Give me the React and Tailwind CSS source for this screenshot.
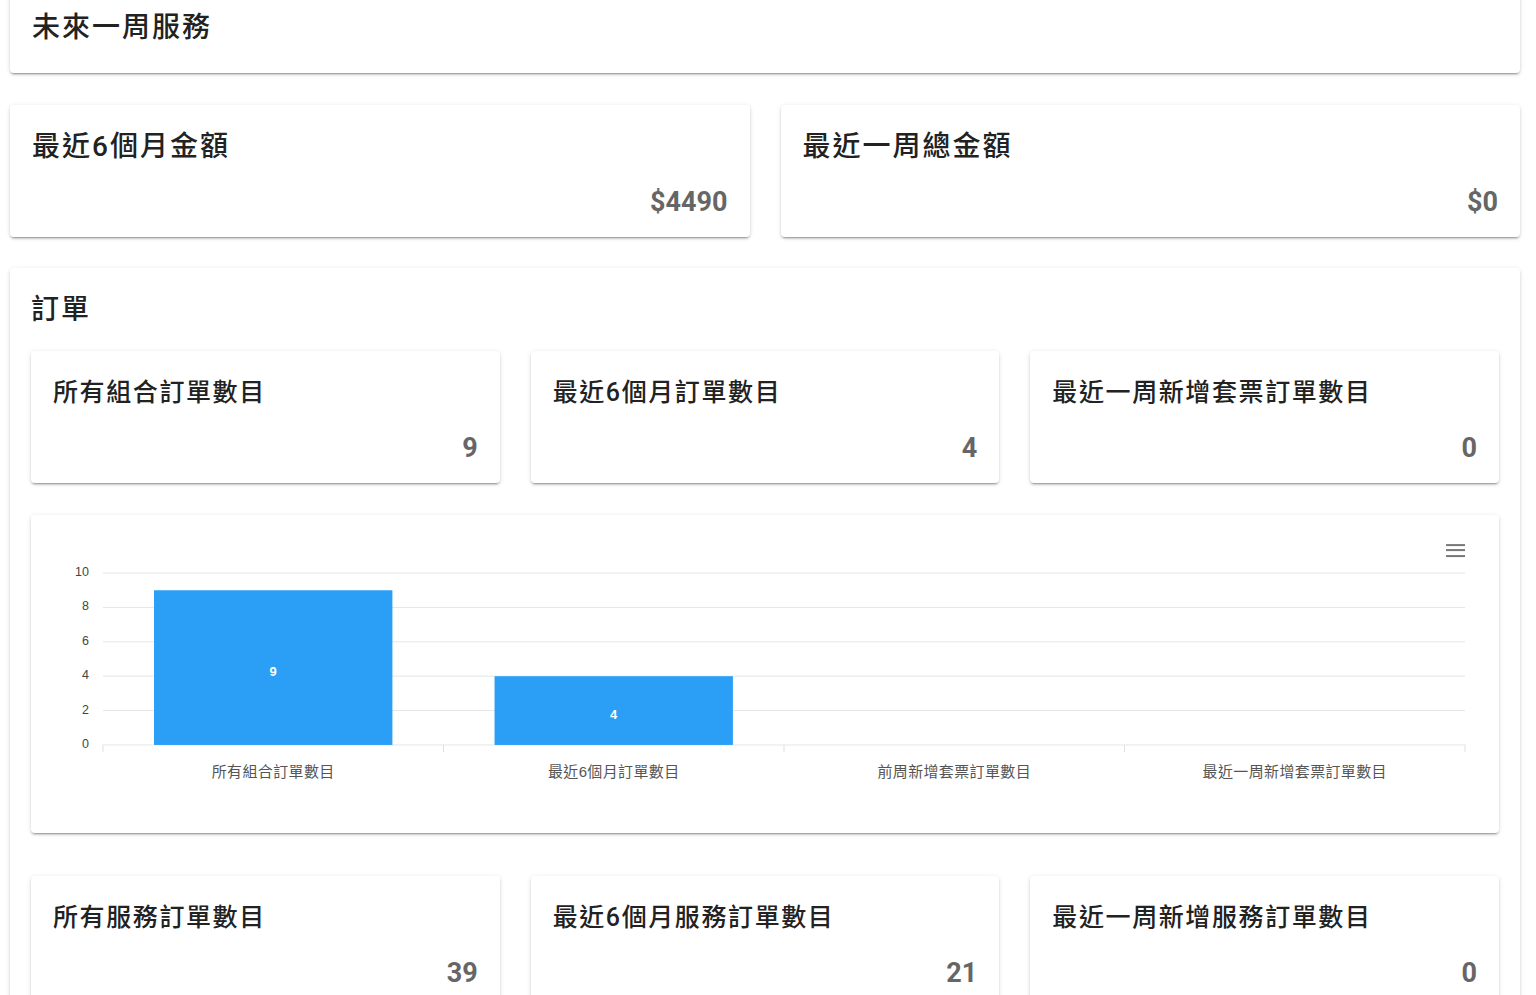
import React from 'react'

const shadow = 'shadow-[0_3px_1px_-2px_rgba(0,0,0,0.2),0_2px_2px_0_rgba(0,0,0,0.14),0_1px_5px_0_rgba(0,0,0,0.12)]'
const font = { fontFamily: 'Roboto, "Noto Sans CJK TC", sans-serif' }

function StatCard({ title, value, big }) {
    return (
        <div className={`bg-white rounded-[4px] ${shadow} pt-[24px] px-[22px] pb-[20px] h-[132px] flex flex-col`}>
            <h3 className={`${big ? 'text-[28px] tracking-[2px]' : 'text-[25px] tracking-[1.6px]'} leading-[36px] font-medium text-[#222]`}>{title}</h3>
            <div className="mt-auto text-right text-[27px] leading-[30px] font-bold text-[#666]">{value}</div>
        </div>
    )
}

function Chart() {
    const data = [
        { label: '所有組合訂單數目', v: 9 },
        { label: '最近6個月訂單數目', v: 4 },
        { label: '前周新增套票訂單數目', v: 0 },
        { label: '最近一周新增套票訂單數目', v: 0 },
    ]
    const x0 = 72, x1 = 1435, yTop = 58, yBot = 230
    const cw = (x1 - x0) / 4
    const y = (v) => yBot - (v / 10) * (yBot - yTop)

    return (
        <div className={`bg-white rounded-[4px] ${shadow} h-[318px] relative`}>
            <svg width="100%" height="318" viewBox="0 0 1469 318" className="block">
                {[0, 2, 4, 6, 8, 10].map((t) => (
                    <g key={t}>
                        <line x1={x0} x2={x1} y1={y(t)} y2={y(t)} stroke="#e6e6e6" strokeWidth="1" />
                        <text x={58} y={y(t) + 3} textAnchor="end" fontSize="12.5" fill="#444" fontFamily="Liberation Sans, sans-serif">{t}</text>
                    </g>
                ))}
                {[0, 1, 2, 3, 4].map((i) => (
                    <line key={i} x1={x0 + i * cw} x2={x0 + i * cw} y1={yBot} y2={yBot + 7} stroke="#e0e0e0" />
                ))}
                {data.map((d, i) => {
                    const cx = x0 + cw * (i + 0.5)
                    const bw = cw * 0.7
                    return (
                        <g key={i}>
                            {d.v > 0 && (
                                <>
                                    <rect x={cx - bw / 2} y={y(d.v)} width={bw} height={yBot - y(d.v)} fill="#2a9ff5" />
                                    <text x={cx} y={(y(d.v) + yBot) / 2 + 8} textAnchor="middle" fontSize="13" fontWeight="bold" fill="#fff" fontFamily="Liberation Sans, sans-serif">{d.v}</text>
                                </>
                            )}
                            <text x={cx} y={262} textAnchor="middle" fontSize="15" letterSpacing="0.4" fill="#555" fontFamily='"Liberation Sans", "Noto Sans CJK TC", sans-serif'>{d.label}</text>
                        </g>
                    )
                })}
                <g fill="#777">
                    <rect x="1416" y="29" width="19" height="2" />
                    <rect x="1416" y="34" width="19" height="2" />
                    <rect x="1416" y="40" width="19" height="2" />
                </g>
            </svg>
        </div>
    )
}

export default function App() {
    return (
        <div className="min-h-screen bg-white px-[10px] pr-[16px] overflow-hidden" style={font}>
            <div className={`bg-white rounded-[4px] ${shadow} -mt-[15px] pt-[25px] px-[22px] h-[88px]`}>
                <h2 className="text-[28px] leading-[36px] font-medium text-[#222] tracking-[2px]">未來一周服務</h2>
            </div>

            <div className="grid grid-cols-2 gap-[31px] mt-[32px]">
                <StatCard big title="最近6個月金額" value="$4490" />
                <StatCard big title="最近一周總金額" value="$0" />
            </div>

            <div className={`bg-white rounded-[4px] ${shadow} mt-[31px] pt-[24px] px-[21px] pb-[40px]`}>
                <h2 className="text-[28px] leading-[36px] font-medium text-[#222] tracking-[2px] mb-[23px]">訂單</h2>

                <div className="grid grid-cols-3 gap-[31px]">
                    <StatCard title="所有組合訂單數目" value="9" />
                    <StatCard title="最近6個月訂單數目" value="4" />
                    <StatCard title="最近一周新增套票訂單數目" value="0" />
                </div>

                <div className="mt-[32px]">
                    <Chart />
                </div>

                <div className="grid grid-cols-3 gap-[31px] mt-[43px]">
                    <StatCard title="所有服務訂單數目" value="39" />
                    <StatCard title="最近6個月服務訂單數目" value="21" />
                    <StatCard title="最近一周新增服務訂單數目" value="0" />
                </div>
            </div>
        </div>
    )
}
